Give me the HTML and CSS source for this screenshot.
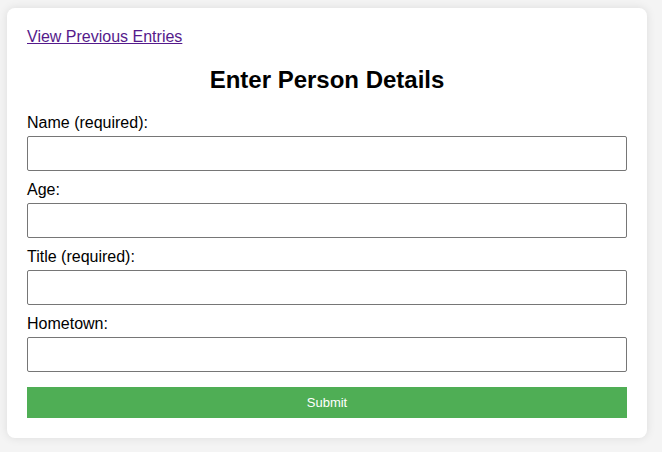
FILE: index.html
```html
<!DOCTYPE html>
<html>
<head>
<meta charset="utf-8">
<link rel="stylesheet" href="styles.css">
</head>
<body>
<div class="card">
  <a class="prev" href="#">View Previous Entries</a>
  <h2 class="title">Enter Person Details</h2>
  <form class="form">
    <label class="label">Name (required):</label>
    <input class="field" type="text">
    <label class="label">Age:</label>
    <input class="field" type="text">
    <label class="label">Title (required):</label>
    <input class="field" type="text">
    <label class="label">Hometown:</label>
    <input class="field" type="text">
    <button class="submit" type="button">Submit</button>
  </form>
</div>
</body>
</html>
```
FILE: styles.css
```css
html, body {
  margin: 0;
  background: #f4f4f4;
}
body {
  padding: 8px 7px;
  font-family: "Liberation Sans", Arial, sans-serif;
  font-size: 16px;
}
.card {
  width: 600px;
  background: #fff;
  padding: 20px;
  border-radius: 8px;
  box-shadow: 0 0 10px rgba(0, 0, 0, 0.1);
}
.prev {
  color: #551a8b;
  text-decoration: underline;
  display: block;
  width: max-content;
}
.title {
  text-align: center;
  font-size: 24px;
  font-weight: bold;
  margin: 20px 0;
}
.form {
  display: flex;
  flex-direction: column;
}
.label {
  display: block;
  margin-bottom: 4px;
  color: #000;
}
.field {
  box-sizing: border-box;
  height: 35px;
  width: 100%;
  margin: 0 0 10px 0;
  border: 1px solid #767676;
  border-radius: 2px;
  padding: 8px;
  font-size: 16px;
  background: #fff;
}
.submit {
  margin-top: 5px;
  height: 31px;
  width: 100%;
  border: none;
  background: #4fae55;
  color: #fff;
  font-family: "Liberation Sans", Arial, sans-serif;
  font-size: 13px;
}
```
